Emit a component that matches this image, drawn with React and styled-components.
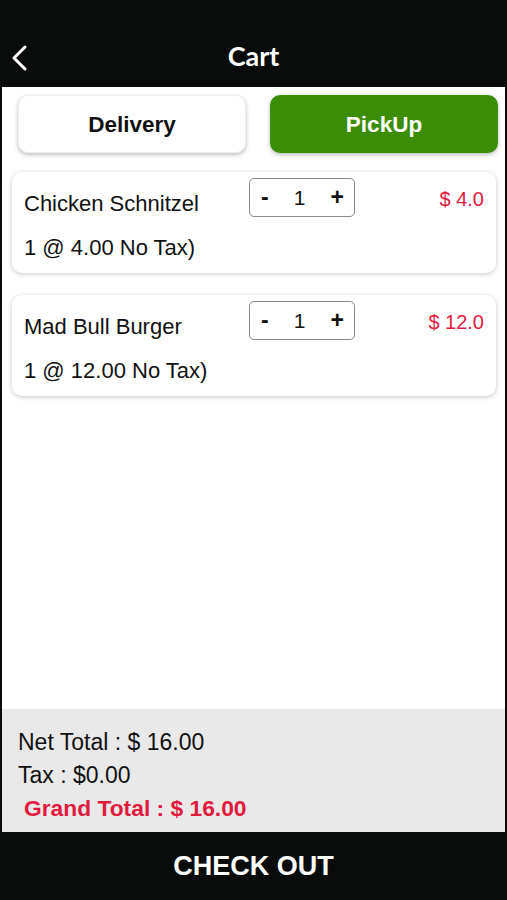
import React from 'react'
import styled, { createGlobalStyle } from 'styled-components'

const Global = createGlobalStyle`
  html, body { margin: 0; padding: 0; }
  body { background: #0a0c0c; font-family: "Liberation Sans", Arial, sans-serif; }
`

const items = [
  { name: 'Chicken Schnitzel', qty: 1, price: 4.0 },
  { name: 'Mad Bull Burger', qty: 1, price: 12.0 },
]

export default function App() {
  const net = items.reduce((s, i) => s + i.qty * i.price, 0)
  return (
    <>
      <Global />
      <Page>
        <StatusBar />
        <Header>
          <BackButton aria-label="Back">
            <svg width="18" height="28" viewBox="0 0 18 28" fill="none">
              <path d="M15 3 L4 14 L15 25" stroke="#fff" strokeWidth="3" strokeLinecap="round" strokeLinejoin="round" />
            </svg>
          </BackButton>
          <Title>Cart</Title>
        </Header>
        <Content>
          <ToggleRow>
            <Toggle>Delivery</Toggle>
            <Toggle $active>PickUp</Toggle>
          </ToggleRow>
          <CardList>
            {items.map((item) => (
              <Card key={item.name}>
                <ItemName>{item.name}</ItemName>
                <Stepper>
                  <StepBtn>-</StepBtn>
                  <Qty>{item.qty}</Qty>
                  <StepBtn>+</StepBtn>
                </Stepper>
                <Price>$ {item.price.toFixed(1)}</Price>
                <Detail>{item.qty} @ {item.price.toFixed(2)} No Tax)</Detail>
              </Card>
            ))}
          </CardList>
          <Spacer />
          <Summary>
            <SummaryLine>Net Total : $ {net.toFixed(2)}</SummaryLine>
            <SummaryLine>Tax : $0.00</SummaryLine>
            <SummaryLine $grand>Grand Total : $ {net.toFixed(2)}</SummaryLine>
          </Summary>
        </Content>
        <Checkout>CHECK OUT</Checkout>
      </Page>
    </>
  )
}

const Page = styled.div`
  height: 100vh;
  display: flex;
  flex-direction: column;
  background: #0a0c0c;
`
const StatusBar = styled.div`
  height: 28px;
  flex-shrink: 0;
`
const Header = styled.div`
  height: 59px;
  box-sizing: border-box;
  padding-bottom: 4px;
  flex-shrink: 0;
  display: flex;
  align-items: center;
  justify-content: center;
  position: relative;
`
const BackButton = styled.div`
  position: absolute;
  left: 10px;
  top: 16px;
  display: flex;
`
const Title = styled.div`
  color: #fff;
  font-family: Lato, "Open Sans", sans-serif;
  font-weight: 700;
  font-size: 27px;
`
const Content = styled.div`
  flex: 1;
  margin: 0 2px;
  background: #fff;
  display: flex;
  flex-direction: column;
  padding-top: 8px;
`
const ToggleRow = styled.div`
  display: grid;
  grid-template-columns: 1fr 1fr;
  gap: 24px;
  padding: 0 7px 0 16px;
`
const Toggle = styled.div`
  height: 58px;
  box-sizing: border-box;
  padding-top: 2px;
  border-radius: 10px;
  display: flex;
  align-items: center;
  justify-content: center;
  font-weight: 700;
  font-size: 22.5px;
  background: ${(p) => (p.$active ? '#3b8d06' : '#fff')};
  color: ${(p) => (p.$active ? '#fff' : '#111')};
  box-shadow: 0 2px 4px rgba(0, 0, 0, 0.25);
  border: ${(p) => (p.$active ? 'none' : '1px solid #eee')};
`
const CardList = styled.div`
  display: flex;
  flex-direction: column;
  gap: 22px;
  padding: 19px 9px 0 10px;
`
const Card = styled.div`
  height: 101px;
  box-sizing: border-box;
  border-radius: 10px;
  background: #fff;
  box-shadow: 0 1px 5px rgba(0, 0, 0, 0.22);
  display: grid;
  grid-template-columns: 225px 106px 1fr;
  grid-template-rows: auto 1fr;
  align-items: start;
  padding: 6px 12px 0 12px;
  color: #111;
`
const ItemName = styled.div`
  font-size: 22px;
  line-height: 24px;
  margin-top: 14px;
  white-space: nowrap;
`
const Stepper = styled.div`
  height: 39px;
  box-sizing: border-box;
  border: 1px solid #8a8a8a;
  border-radius: 5px;
  display: flex;
  align-items: center;
  justify-content: space-between;
  padding: 0 10px 0 11px;
`
const StepBtn = styled.span`
  font-weight: 700;
  font-size: 23px;
`
const Qty = styled.span`
  font-size: 21px;
`
const Price = styled.div`
  justify-self: end;
  color: #e11a40;
  font-size: 20px;
  line-height: 22px;
  margin-top: 10px;
`
const Detail = styled.div`
  grid-column: 1 / -1;
  font-size: 22px;
  line-height: 24px;
  margin-top: 19px;
`
const Spacer = styled.div`
  flex: 1;
`
const Summary = styled.div`
  background: #e9e9e9;
  padding: 17px 16px 7px;
  display: flex;
  flex-direction: column;
`
const SummaryLine = styled.div`
  height: 33px;
  display: flex;
  align-items: center;
  font-size: ${(p) => (p.$grand ? '22.8px' : '23px')};
  color: ${(p) => (p.$grand ? '#e11a40' : '#111')};
  font-weight: ${(p) => (p.$grand ? 700 : 400)};
  padding-left: ${(p) => (p.$grand ? '6px' : '0')};
`
const Checkout = styled.div`
  height: 68px;
  flex-shrink: 0;
  display: flex;
  align-items: center;
  justify-content: center;
  color: #fff;
  font-weight: 700;
  font-size: 27px;
`
